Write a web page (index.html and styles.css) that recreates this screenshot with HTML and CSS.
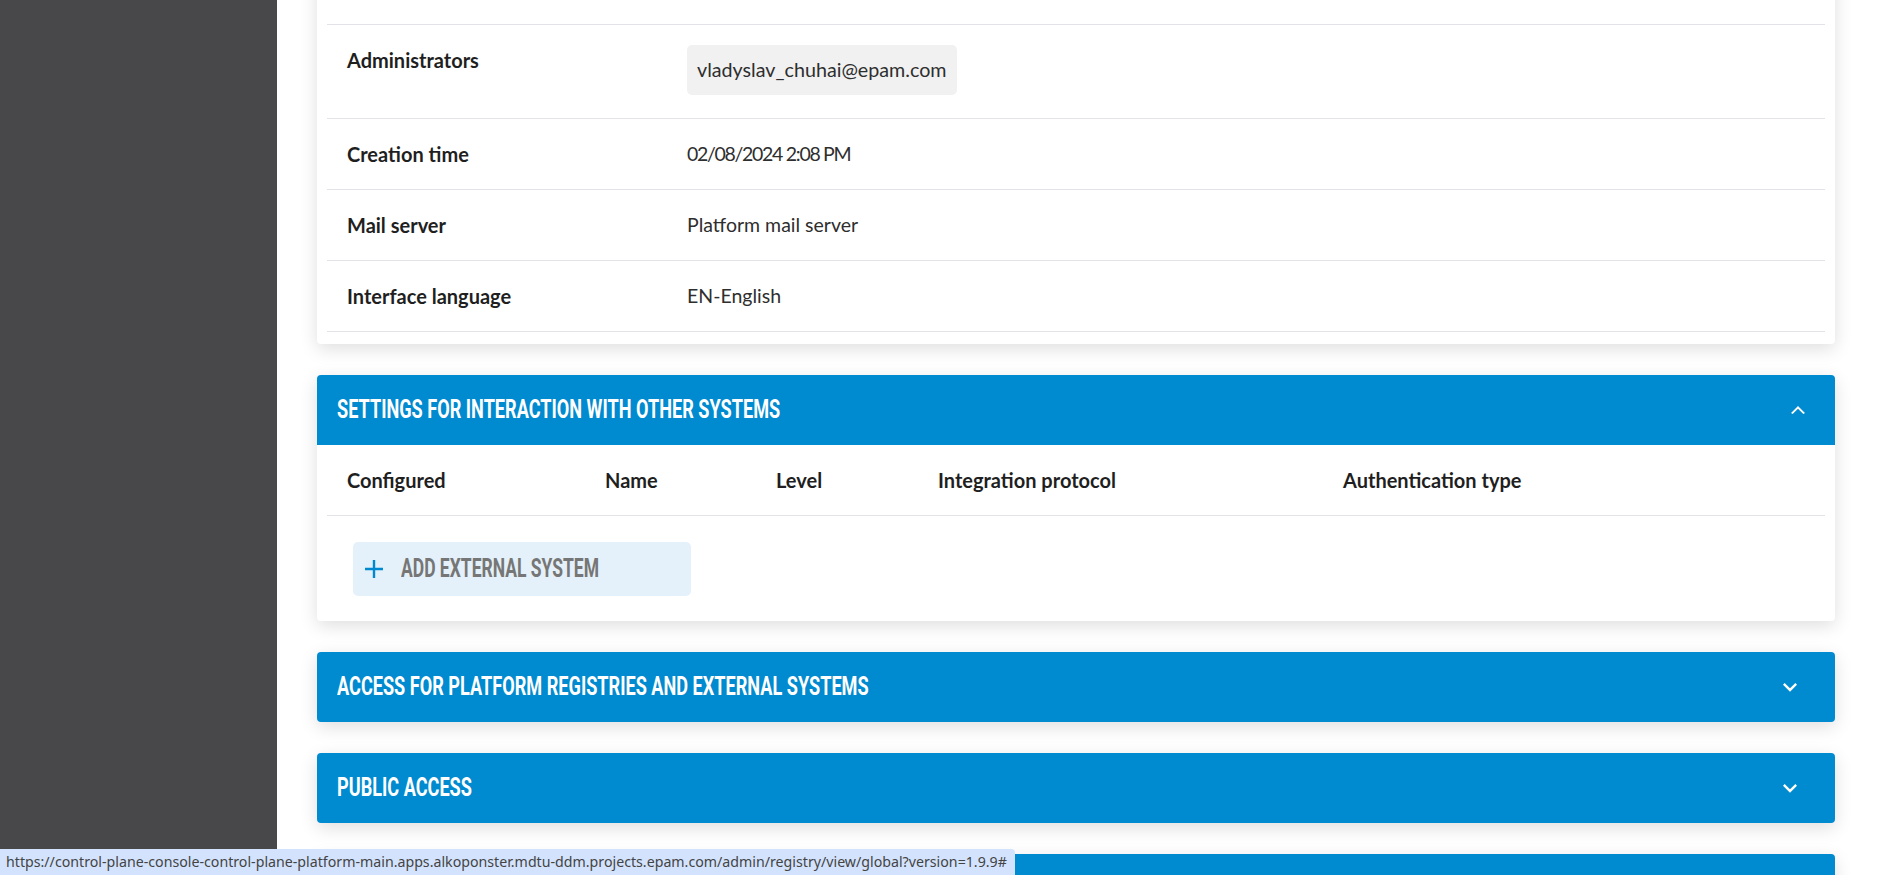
FILE: index.html
```html
<!DOCTYPE html>
<html lang="en">
<head>
<meta charset="utf-8">
<title>Registry</title>
<link rel="stylesheet" href="styles.css">
</head>
<body>
<div class="layout">
  <aside class="sidebar"></aside>
  <main class="main">
    <div class="content">
      <section class="card info">
        <div class="row row-chip"><div class="label">Administrators</div><div class="value"><span class="chip">vladyslav_chuhai@epam.com</span></div></div>
        <div class="row"><div class="label">Creation time</div><div class="value"><span class="num">02/08/2024 2:08 PM</span></div></div>
        <div class="row"><div class="label">Mail server</div><div class="value">Platform mail server</div></div>
        <div class="row"><div class="label">Interface language</div><div class="value">EN-English</div></div>
      </section>

      <section class="panel">
        <header class="panel-head expanded">
          <h2 class="panel-title"><span class="cond">SETTINGS FOR INTERACTION WITH OTHER SYSTEMS</span></h2>
          <svg class="chev" viewBox="0 0 24 24" width="28" height="28"><path d="M7.41 15.41L12 10.83l4.59 4.58L18 14.59l-6-6-6 6z" fill="#fff"/></svg>
        </header>
        <div class="panel-body">
          <div class="thead">
            <div>Configured</div>
            <div>Name</div>
            <div>Level</div>
            <div>Integration protocol</div>
            <div>Authentication type</div>
          </div>
          <div class="actions">
            <button class="add-btn" type="button">
              <svg class="plus" viewBox="0 0 18 18" width="18" height="18"><path d="M9 0v18M0 9h18" stroke="#0089cf" stroke-width="2.4" fill="none"/></svg>
              <span class="cond-btn">ADD EXTERNAL SYSTEM</span>
            </button>
          </div>
        </div>
      </section>

      <section class="panel">
        <header class="panel-head collapsed">
          <h2 class="panel-title"><span class="cond">ACCESS FOR PLATFORM REGISTRIES AND EXTERNAL SYSTEMS</span></h2>
          <svg class="chev" viewBox="0 0 24 24" width="28" height="28"><path d="M16.59 8.59L12 13.17 7.41 8.59 6 10l6 6 6-6z" fill="#fff"/></svg>
        </header>
      </section>

      <section class="panel">
        <header class="panel-head collapsed">
          <h2 class="panel-title"><span class="cond">PUBLIC ACCESS</span></h2>
          <svg class="chev" viewBox="0 0 24 24" width="28" height="28"><path d="M16.59 8.59L12 13.17 7.41 8.59 6 10l6 6 6-6z" fill="#fff"/></svg>
        </header>
      </section>

      <section class="panel">
        <header class="panel-head collapsed"></header>
      </section>
    </div>
  </main>
</div>
<div class="statusbar">https://control-plane-console-control-plane-platform-main.apps.alkoponster.mdtu-ddm.projects.epam.com/admin/registry/view/global?version=1.9.9#</div>
</body>
</html>
```

FILE: styles.css
```css
html, body {
  margin: 0;
  padding: 0;
  height: 100%;
  overflow: hidden;
  background: #ffffff;
}

.layout {
  display: flex;
  height: 100vh;
  overflow: hidden;
}

.sidebar {
  flex: 0 0 277px;
  background: #48484a;
}

.main {
  flex: 1 1 auto;
  padding: 0 57px 0 40px;
  overflow: hidden;
  background: #ffffff;
}

.content {
  display: flex;
  flex-direction: column;
  gap: 31px;
  margin-top: -59px;
}

.card,
.panel {
  background: #ffffff;
  border-radius: 4px;
  box-shadow: 0 5px 18px rgba(0, 0, 0, 0.13);
}

.info {
  padding: 83px 10px 12px;
}

.row {
  display: grid;
  grid-template-columns: 340px 1fr;
  padding-left: 20px;
  border-bottom: 1px solid #e2e2e8;
  align-items: start;
  font-family: "Lato", "Liberation Sans", sans-serif;
  line-height: 24px;
}

.row:first-child {
  border-top: 1px solid #e2e2e8;
}

.label {
  padding: 23px 0;
  font-size: 20px;
  font-weight: 700;
  color: #1f1f1f;
}

.value {
  padding: 23px 0;
  font-size: 19.5px;
  color: #2e2e2e;
}

.num {
  letter-spacing: -1.3px;
}

.row-chip .value {
  padding: 20px 0 23px;
}

.chip {
  display: inline-block;
  background: #f1f1f1;
  border-radius: 5px;
  padding: 13px 10px;
  line-height: 24px;
  font-size: 19.7px;
}

.panel-head {
  height: 70px;
  display: flex;
  align-items: center;
  justify-content: space-between;
  padding-left: 20px;
  background: #008acf;
  border-radius: 4px;
  color: #ffffff;
}

.panel-head.expanded {
  border-radius: 4px 4px 0 0;
  padding-right: 23px;
}

.panel-head.collapsed {
  padding-right: 31px;
}

.panel-title {
  margin: 0;
  font-family: "Roboto", "Liberation Sans", sans-serif;
  font-weight: 700;
  font-size: 25px;
  line-height: 28px;
  white-space: nowrap;
}

.cond {
  display: inline-block;
  transform: scaleX(0.725);
  transform-origin: left center;
  white-space: nowrap;
}

.cond-btn {
  display: inline-block;
  transform: scaleX(0.7);
  transform-origin: left center;
  white-space: nowrap;
}

.chev {
  display: block;
}

.panel-body {
  padding: 0 10px 25px;
}

.thead {
  display: grid;
  grid-template-columns: 258px 171px 162px 405px 1fr;
  padding: 23px 0 23px 20px;
  border-bottom: 1px solid #e2e2e8;
  font-family: "Lato", "Liberation Sans", sans-serif;
  font-size: 20px;
  font-weight: 700;
  line-height: 24px;
  color: #1f1f1f;
}

.actions {
  padding: 26px 26px 0;
}

.add-btn {
  display: flex;
  align-items: center;
  gap: 18px;
  width: 338px;
  height: 54px;
  padding: 0 0 0 12px;
  border: 0;
  border-radius: 5px;
  background: #e5f1fa;
  color: #767676;
  font-family: "Roboto", "Liberation Sans", sans-serif;
  font-weight: 700;
  font-size: 25px;
  line-height: 28px;
  overflow: visible;
  cursor: pointer;
}

.plus {
  display: block;
  flex: 0 0 18px;
}

.statusbar {
  position: fixed;
  left: 0;
  bottom: 0;
  height: 26px;
  line-height: 26px;
  padding: 0 8px 0 6px;
  background: #d3e3fd;
  color: #444444;
  font-family: "Noto Sans", "Liberation Sans", sans-serif;
  font-size: 14.2px;
  border-top-right-radius: 4px;
  white-space: nowrap;
}
```
